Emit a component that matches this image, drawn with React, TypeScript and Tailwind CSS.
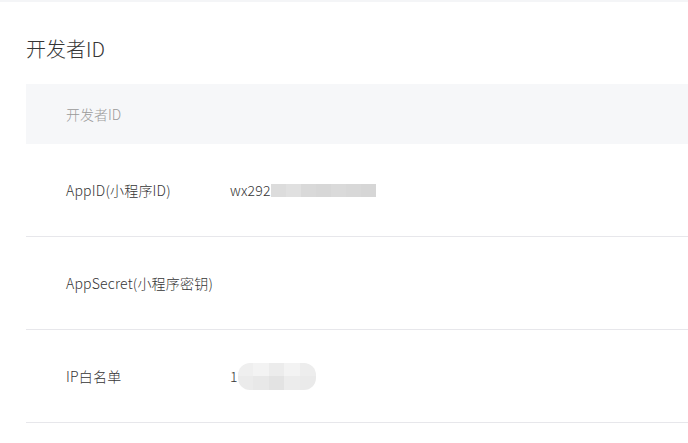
import React from "react";

const font = { fontFamily: '"Noto Sans CJK SC", "Noto Sans", sans-serif' };

function Mosaic() {
  const cells = ["#dcdcdc", "#e0e0e0", "#d9d9d9", "#d7d7d7", "#dadada", "#d8d8d8", "#d6d6d6"];
  return (
    <div className="flex h-[13px]">
      {cells.map((c, i) => (
        <div key={i} className="h-full w-[15px]" style={{ background: c }} />
      ))}
    </div>
  );
}

function Blob() {
  const top = ["#efefef", "#f3f3f3", "#ececec", "#f3f3f3", "#ededed"];
  const bot = ["#ebebeb", "#e8e8e8", "#e3e3e3", "#ececec", "#eaeaea"];
  return (
    <div className="flex h-[27px] w-[78px] flex-col overflow-hidden rounded-[12px]">
      <div className="flex h-[13px]">
        {top.map((c, i) => (
          <div key={i} className="h-full flex-1" style={{ background: c }} />
        ))}
      </div>
      <div className="flex h-[14px]">
        {bot.map((c, i) => (
          <div key={i} className="h-full flex-1" style={{ background: c }} />
        ))}
      </div>
    </div>
  );
}

function Row({ label, children }: { label: string; children?: React.ReactNode }) {
  return (
    <div className="flex h-[93px] items-center border-b border-[#e7e7eb] pl-[40px] text-[14px] font-light tracking-[0.2px] text-[#353535]">
      <div className="w-[164px]">{label}</div>
      <div className="flex items-center">{children}</div>
    </div>
  );
}

export default function App() {
  return (
    <div className="min-h-[443px] w-full overflow-hidden bg-white" style={font}>
      <div className="h-[2px] bg-[#f4f5f7]" />
      <div className="pl-[26px]">
        <div className="pt-[33px] text-[20px] font-light leading-[28px] text-[#353535]">开发者ID</div>
        <div className="mt-[21px]">
          <div className="flex h-[60px] items-center bg-[#f6f7f9] pl-[40px] text-[14px] font-light text-[#9a9a9a]">
            开发者ID
          </div>
          <Row label="AppID(小程序ID)">
            <span>wx292</span>
            <Mosaic />
          </Row>
          <Row label="AppSecret(小程序密钥)" />
          <Row label="IP白名单">
            <span>1</span>
            <Blob />
          </Row>
        </div>
      </div>
    </div>
  );
}
